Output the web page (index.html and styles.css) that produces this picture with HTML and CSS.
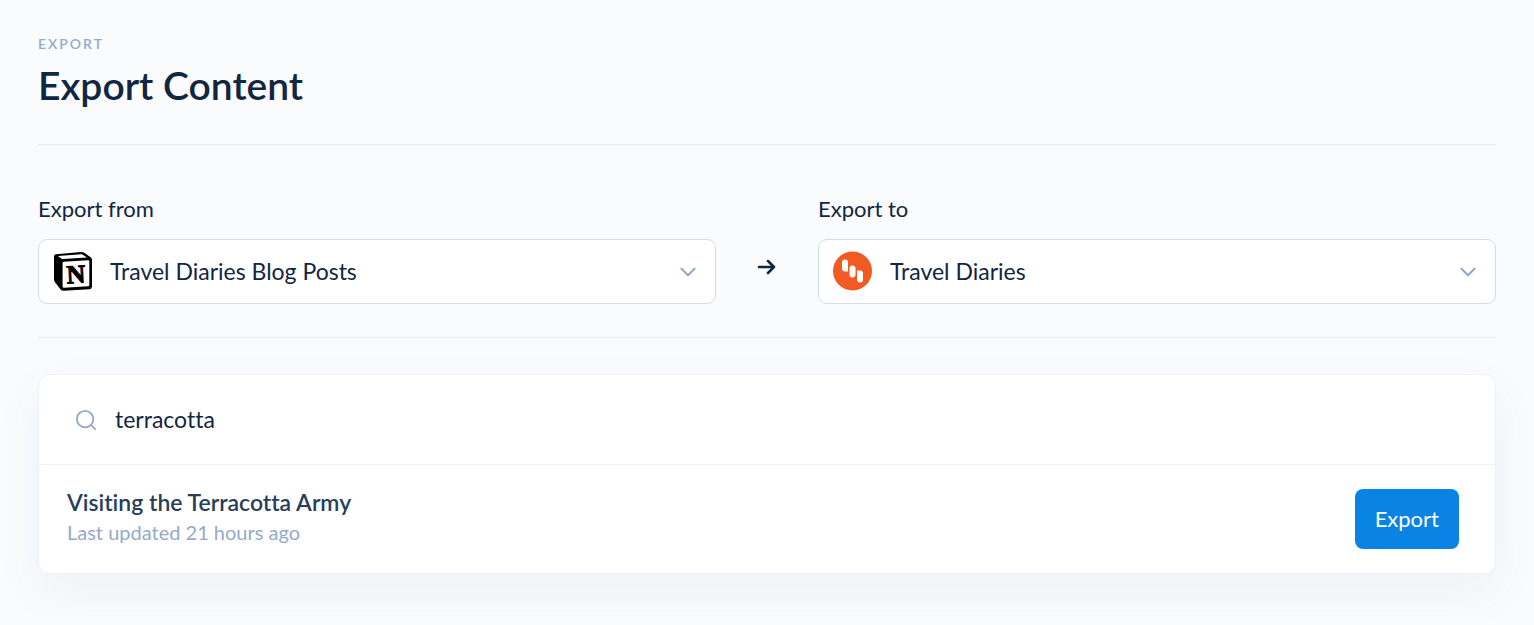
FILE: index.html
```html
<!DOCTYPE html>
<html lang="en">
<head>
<meta charset="utf-8">
<meta name="viewport" content="width=device-width, initial-scale=1">
<title>Export Content</title>
<link rel="stylesheet" href="styles.css">
</head>
<body>
<main class="page">
  <header class="header">
    <p class="eyebrow">EXPORT</p>
    <h1 class="title">Export Content</h1>
  </header>

  <form class="route">
    <div class="field">
      <label class="label" for="from">Export from</label>
      <div class="picker">
        <select class="select" id="from"><option>Travel Diaries Blog Posts</option></select>
        <svg class="logo" viewBox="0 0 40 40" aria-hidden="true">
          <path fill="#000" d="M3 3.200 28 1.100Q30 1 31.600 2L37.600 6.200Q39 7.100 39 8.800V35.500Q39 38 36.500 38.200L10.500 39.700Q8.700 39.800 7.600 38.400L2 31.200Q1 30 1 28.300V5.400Q1 3.400 3 3.200Z"/>
          <path fill="#fff" d="M5 5.100 28 3.300Q29.200 3.200 30.200 3.900L34 6.500 10 8Q9 8 8.200 7.400L5 5.100Z"/>
          <path fill="#fff" d="M10.800 10.700 35 9.300Q36.300 9.200 36.300 10.500V34Q36.300 35.200 35.100 35.300L11 36.700Q9.600 36.800 9.600 35.400V12.100Q9.600 10.800 10.800 10.700Z"/>
          <text class="logo-letter" x="23" y="32" text-anchor="middle" transform="rotate(-3 23 23)">N</text>
        </svg>
        <svg class="chevron" viewBox="0 0 24 24" aria-hidden="true"><path d="m6 9 6 6 6-6"/></svg>
      </div>
    </div>
    <svg class="arrow" viewBox="0 0 24 24" aria-hidden="true"><path d="M4 12h15M13 6l6 6-6 6"/></svg>
    <div class="field">
      <label class="label" for="to">Export to</label>
      <div class="picker">
        <select class="select" id="to"><option>Travel Diaries</option></select>
        <svg class="logo" viewBox="0 0 40 40" aria-hidden="true">
          <circle cx="19.500" cy="20" r="19.500" fill="#f15a22"/>
          <g fill="#fff">
            <path d="M9 11.500q0-3 3-3t3 3v9h-3q-3 0-3-3z"/>
            <path d="M16.500 17.500q0-3 3-3t3 3v6q0 3-3 3t-3-3z"/>
            <path d="M24 19.500h3q3 0 3 3v6q0 3-3 3t-3-3z"/>
          </g>
        </svg>
        <svg class="chevron" viewBox="0 0 24 24" aria-hidden="true"><path d="m6 9 6 6 6-6"/></svg>
      </div>
    </div>
  </form>

  <section class="card">
    <div class="search">
      <svg class="search-icon" viewBox="0 0 24 24" aria-hidden="true"><circle cx="11" cy="11" r="9"/><path d="m17.500 17.500 4.500 4.500"/></svg>
      <input class="search-input" type="text" value="terracotta" aria-label="Search content">
    </div>
    <article class="result">
      <div class="result-text">
        <h2 class="result-title">Visiting the Terracotta Army</h2>
        <p class="result-meta">Last updated 21 hours ago</p>
      </div>
      <button class="button" type="button">Export</button>
    </article>
  </section>
</main>
</body>
</html>
```
FILE: styles.css
```css
* { box-sizing: border-box; }

body {
  margin: 0;
  background: #fafbfd;
  color: #12263f;
  font-family: Lato, "Open Sans", sans-serif;
  font-size: 23px;
  font-variant-ligatures: none;
  line-height: 32px;
}

h1, h2, p { margin: 0; }

.page { padding: 32px 38px 48px; }

.header {
  padding-bottom: 34px;
  border-bottom: 1px solid #e3ebf6;
}

.eyebrow {
  color: #95aac9;
  font-size: 14px;
  font-weight: 600;
  line-height: 24px;
  letter-spacing: 2px;
}

.title {
  padding-top: 4px;
  font-size: 39px;
  font-weight: 600;
  line-height: 50px;
}

.route {
  display: flex;
  align-items: center;
  padding: 48px 0 33px;
  border-bottom: 1px solid #e3ebf6;
}

.field { flex: 1; }

.label {
  display: block;
  padding-bottom: 14px;
  font-size: 22px;
}

.picker {
  display: grid;
  grid-template-columns: 72px 1fr 52px;
  align-items: center;
}

.select {
  grid-area: 1 / 1 / 2 / 4;
  width: 100%;
  height: 65px;
  padding: 0 52px 2px 71px;
  border: 1px solid #d2ddec;
  border-radius: 9px;
  background: #fff;
  color: inherit;
  font: inherit;
  appearance: none;
}

.logo, .chevron {
  grid-row: 1;
  pointer-events: none;
}

.logo {
  grid-column: 1;
  width: 40px;
  height: 40px;
  margin: 0 0 1px 15px;
}

.logo-letter {
  font-family: "Liberation Serif", serif;
  font-size: 26px;
  font-weight: 700;
  stroke: #000;
  stroke-width: 1px;
}

.chevron {
  grid-column: 3;
  width: 26px;
  height: 26px;
  margin-left: 11px;
  fill: none;
  stroke: #95aac9;
  stroke-width: 2;
  stroke-linecap: round;
  stroke-linejoin: round;
}

.arrow {
  width: 24px;
  height: 24px;
  margin: 36px 39px 0;
  fill: none;
  stroke: #12263f;
  stroke-width: 2.5;
  stroke-linecap: round;
  stroke-linejoin: round;
}

.card {
  margin-top: 36px;
  border: 1px solid #edf2f9;
  border-radius: 12px;
  background: #fff;
  box-shadow: 0 18px 48px rgba(40, 100, 130, 0.06);
}

.search {
  display: flex;
  align-items: center;
  gap: 18px;
  height: 90px;
  padding: 0 36px;
  border-bottom: 1px solid #edf2f9;
}

.search-icon {
  width: 22px;
  height: 22px;
  fill: none;
  stroke: #95aac9;
  stroke-width: 2;
  stroke-linecap: round;
}

.search-input {
  flex: 1;
  min-width: 0;
  padding: 0 0 2px;
  border: 0;
  outline: 0;
  background: transparent;
  color: inherit;
  font: inherit;
}

.result {
  display: flex;
  align-items: center;
  justify-content: space-between;
  padding: 24px 36px 24px 28px;
}

.result-title {
  color: #283e59;
  font-size: 23px;
  font-weight: 600;
  line-height: 26px;
}

.result-meta {
  color: #95aac9;
  font-size: 20px;
  line-height: 34px;
}

.button {
  height: 60px;
  padding: 0 20px;
  border: 0;
  border-radius: 8px;
  background: #0a84e4;
  color: #fff;
  font: inherit;
  font-size: 22px;
}
```
